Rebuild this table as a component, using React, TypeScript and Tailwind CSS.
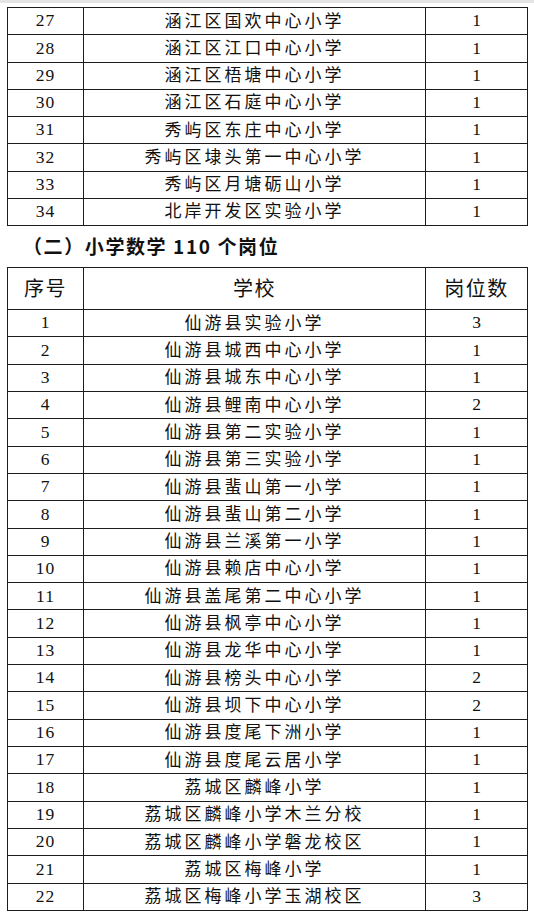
type Row = [string, string, string];

const topRows: Row[] = [
  ["27", "涵江区国欢中心小学", "1"],
  ["28", "涵江区江口中心小学", "1"],
  ["29", "涵江区梧塘中心小学", "1"],
  ["30", "涵江区石庭中心小学", "1"],
  ["31", "秀屿区东庄中心小学", "1"],
  ["32", "秀屿区埭头第一中心小学", "1"],
  ["33", "秀屿区月塘砺山小学", "1"],
  ["34", "北岸开发区实验小学", "1"],
];

const mathRows: Row[] = [
  ["1", "仙游县实验小学", "3"],
  ["2", "仙游县城西中心小学", "1"],
  ["3", "仙游县城东中心小学", "1"],
  ["4", "仙游县鲤南中心小学", "2"],
  ["5", "仙游县第二实验小学", "1"],
  ["6", "仙游县第三实验小学", "1"],
  ["7", "仙游县蜚山第一小学", "1"],
  ["8", "仙游县蜚山第二小学", "1"],
  ["9", "仙游县兰溪第一小学", "1"],
  ["10", "仙游县赖店中心小学", "1"],
  ["11", "仙游县盖尾第二中心小学", "1"],
  ["12", "仙游县枫亭中心小学", "1"],
  ["13", "仙游县龙华中心小学", "1"],
  ["14", "仙游县榜头中心小学", "2"],
  ["15", "仙游县坝下中心小学", "2"],
  ["16", "仙游县度尾下洲小学", "1"],
  ["17", "仙游县度尾云居小学", "1"],
  ["18", "荔城区麟峰小学", "1"],
  ["19", "荔城区麟峰小学木兰分校", "1"],
  ["20", "荔城区麟峰小学磐龙校区", "1"],
  ["21", "荔城区梅峰小学", "1"],
  ["22", "荔城区梅峰小学玉湖校区", "3"],
];

const cell =
  "flex items-center justify-center border-r border-b border-[#1c1c1c] leading-none";

function Cells({ row }: { row: Row }) {
  return (
    <>
      <div className={`${cell} text-[17.5px] tracking-[1px]`}>{row[0]}</div>
      <div className={`${cell} text-[17px] tracking-[3px]`}>{row[1]}</div>
      <div className={`${cell} text-[17.5px]`}>{row[2]}</div>
    </>
  );
}

export default function App() {
  return (
    <div
      className="min-h-screen bg-white text-[#111]"
      style={{ fontFamily: '"Liberation Serif", "Noto Sans CJK SC", serif' }}
    >
      <div className="h-[3px] bg-[#e4e4e4]" />
      <div className="px-[7px] pt-[4px]">
        <div className="grid w-[521px] grid-cols-[76px_342px_1fr] auto-rows-[27.25px] border-l border-t border-[#1c1c1c]">
          {topRows.map((r) => (
            <Cells key={r[0]} row={r} />
          ))}
        </div>

        <div
          className="flex h-[41px] items-center pl-[16px] pb-[1px] text-[19px] font-bold tracking-[1.6px]"
          style={{ fontFamily: '"Noto Sans CJK SC", sans-serif' }}
        >
          （二）小学数学 110 个岗位
        </div>

        <div className="grid w-[521px] grid-cols-[76px_342px_1fr] grid-rows-[42px_repeat(22,27.32px)] border-l border-t border-[#1c1c1c]">
          <div className={`${cell} text-[20px] tracking-[1.5px]`}>序号</div>
          <div className={`${cell} text-[20px] tracking-[1.5px]`}>学校</div>
          <div className={`${cell} text-[20px] tracking-[1.5px]`}>岗位数</div>
          {mathRows.map((r) => (
            <Cells key={r[0]} row={r} />
          ))}
        </div>
      </div>
    </div>
  );
}
